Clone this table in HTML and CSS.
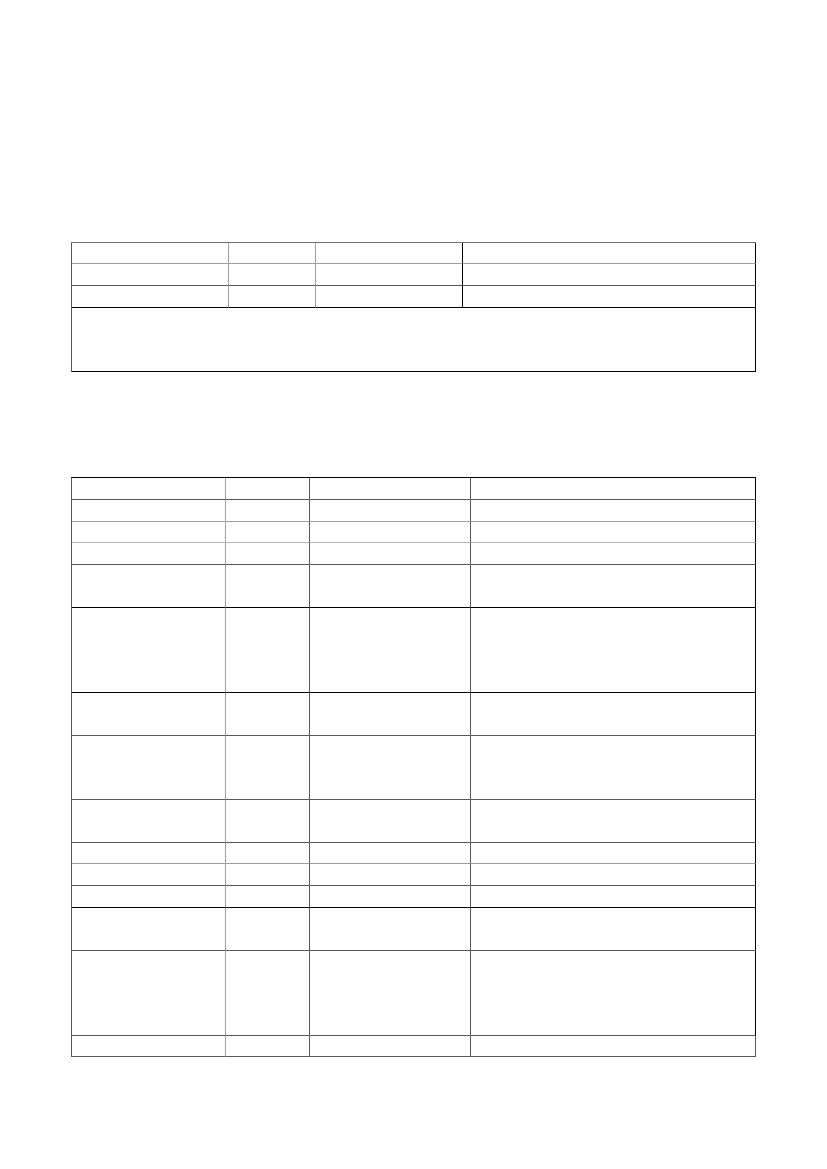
FILE: index.html
```html
<!DOCTYPE html>
<html lang="en">
<head>
<meta charset="utf-8">
<title>Tables</title>
<link rel="stylesheet" href="styles.css">
</head>
<body>
<main class="page">
  <table class="grid t1">
    <colgroup>
      <col class="t1c1"><col class="t1c2"><col class="t1c3"><col class="t1c4">
    </colgroup>
    <tr class="r20 bl"><td class="cl"></td><td class="cl"></td><td class="ck"></td><td class="ck"></td></tr>
    <tr class="r21 bd"><td class="cl"></td><td class="cl"></td><td class="ck"></td><td class="ck"></td></tr>
    <tr class="r21 bk"><td class="cl"></td><td class="cl"></td><td class="ck"></td><td class="ck"></td></tr>
    <tr class="r63 bk"><td class="ck" colspan="4"></td></tr>
  </table>

  <table class="grid t2">
    <colgroup>
      <col class="t2c1"><col class="t2c2"><col class="t2c3"><col class="t2c4">
    </colgroup>
    <tr class="r21 bd"><td class="cl"></td><td class="cd"></td><td class="cd"></td><td class="ck"></td></tr>
    <tr class="r21 bl"><td class="cl"></td><td class="cd"></td><td class="cd"></td><td class="ck"></td></tr>
    <tr class="r20 bll"><td class="cl"></td><td class="cd"></td><td class="cd"></td><td class="ck"></td></tr>
    <tr class="r21 bd"><td class="cl"></td><td class="cd"></td><td class="cd"></td><td class="ck"></td></tr>
    <tr class="r42 bk"><td class="cl"></td><td class="cd"></td><td class="cd"></td><td class="ck"></td></tr>
    <tr class="r84 bk"><td class="cl"></td><td class="cd"></td><td class="cd"></td><td class="ck"></td></tr>
    <tr class="r42 bd"><td class="cl"></td><td class="cd"></td><td class="cd"></td><td class="ck"></td></tr>
    <tr class="r63 bd"><td class="cl"></td><td class="cd"></td><td class="cd"></td><td class="ck"></td></tr>
    <tr class="r42 bd"><td class="cl"></td><td class="cd"></td><td class="cd"></td><td class="ck"></td></tr>
    <tr class="r20 bl"><td class="cl"></td><td class="cd"></td><td class="cd"></td><td class="ck"></td></tr>
    <tr class="r21 bd"><td class="cl"></td><td class="cd"></td><td class="cd"></td><td class="ck"></td></tr>
    <tr class="r21 bk"><td class="cl"></td><td class="cd"></td><td class="cd"></td><td class="ck"></td></tr>
    <tr class="r42 bd"><td class="cl"></td><td class="cd"></td><td class="cd"></td><td class="ck"></td></tr>
    <tr class="r84 bd"><td class="cl"></td><td class="cd"></td><td class="cd"></td><td class="ck"></td></tr>
    <tr class="r20 bd"><td class="cl"></td><td class="cd"></td><td class="cd"></td><td class="cd"></td></tr>
  </table>
</main>
</body>
</html>
```

FILE: styles.css
```css
html, body {
  margin: 0;
  padding: 0;
  background: #ffffff;
  font-family: "Liberation Sans", Arial, sans-serif;
}

.page {
  padding: 242px 0 0 71px;
  display: flex;
  flex-direction: column;
  align-items: flex-start;
}

.grid {
  border-collapse: separate;
  border-spacing: 0;
  table-layout: fixed;
  width: 685px;
  border-left: 1px solid #5a5a5a;
}

.grid td {
  padding: 0;
  border-right: 1px solid #5a5a5a;
  border-bottom: 1px solid #5a5a5a;
}

.t1 {
  border-top: 1px solid #6e6e6e;
}

.t2 {
  margin-top: 105px;
  border-top: 1px solid #000000;
}

/* column widths (content + right border) */
.t1c1 { width: 157px; }
.t1c2 { width: 87px; }
.t1c3 { width: 147px; }
.t1c4 { width: 293px; }

.t2c1 { width: 154px; }
.t2c2 { width: 84px; }
.t2c3 { width: 161px; }
.t2c4 { width: 285px; }

/* row heights */
.r20 td { height: 20px; }
.r21 td { height: 21px; }
.r42 td { height: 42px; }
.r63 td { height: 63px; }
.r84 td { height: 84px; }

/* horizontal rule colours (row bottom) */
.grid .bk td { border-bottom-color: #000000; }
.grid .bd td { border-bottom-color: #5a5a5a; }
.grid .bl td { border-bottom-color: #a0a0a0; }
.grid .bll td { border-bottom-color: #b4b4b4; }

/* vertical rule colours (cell right) */
.grid td.ck { border-right-color: #000000; }
.grid td.cd { border-right-color: #5a5a5a; }
.grid td.cl { border-right-color: #a0a0a0; }
```
